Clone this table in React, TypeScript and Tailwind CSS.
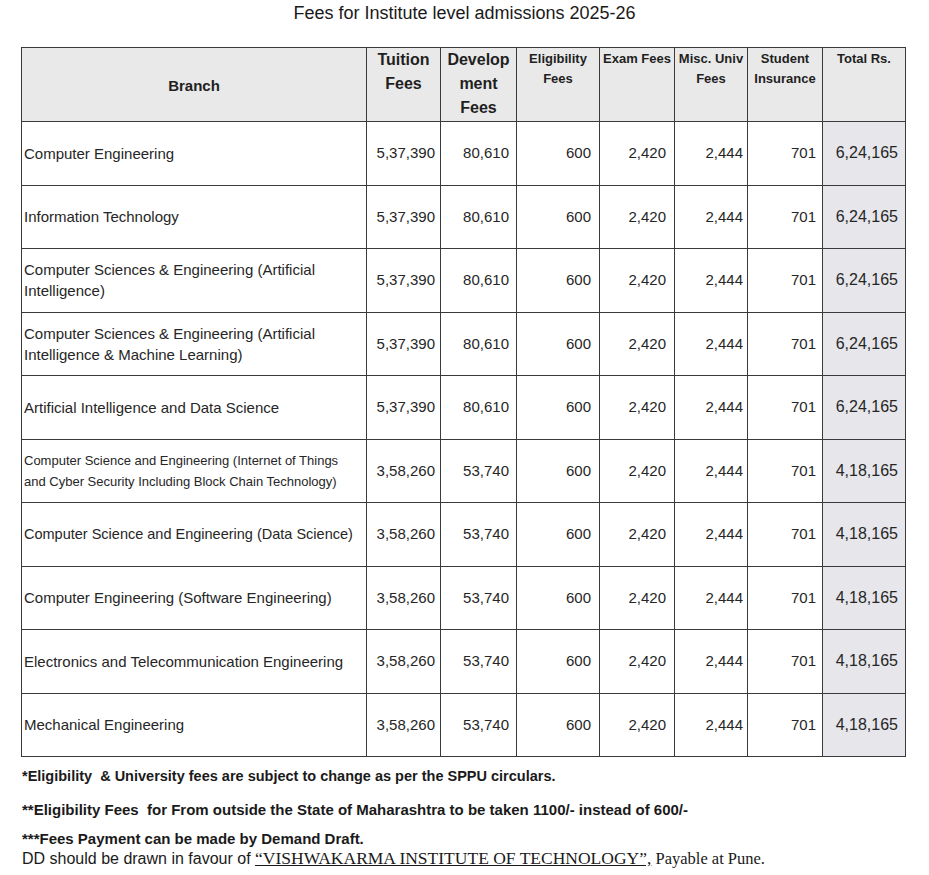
import React from 'react'

const narrow = { fontFamily: '"Liberation Sans Narrow", "Liberation Sans", Arial, sans-serif' }
const serif = { fontFamily: '"Liberation Serif", "Times New Roman", serif' }

type Row = {
  branch: React.ReactNode
  size?: string
  tuition: string
  dev: string
  total: string
}

const rows: Row[] = [
  { branch: 'Computer Engineering', tuition: '5,37,390', dev: '80,610', total: '6,24,165' },
  { branch: 'Information Technology', tuition: '5,37,390', dev: '80,610', total: '6,24,165' },
  {
    branch: (
      <>
        Computer Sciences &amp; Engineering (Artificial
        <br />
        Intelligence)
      </>
    ),
    tuition: '5,37,390',
    dev: '80,610',
    total: '6,24,165',
  },
  {
    branch: (
      <>
        Computer Sciences &amp; Engineering (Artificial
        <br />
        Intelligence &amp; Machine Learning)
      </>
    ),
    tuition: '5,37,390',
    dev: '80,610',
    total: '6,24,165',
  },
  { branch: 'Artificial Intelligence and Data Science', tuition: '5,37,390', dev: '80,610', total: '6,24,165' },
  {
    branch: (
      <>
        Computer Science and Engineering (Internet of Things
        <br />
        and Cyber Security Including Block Chain Technology)
      </>
    ),
    size: 'text-[13px]',
    tuition: '3,58,260',
    dev: '53,740',
    total: '4,18,165',
  },
  {
    branch: 'Computer Science and Engineering (Data Science)',
    size: 'text-[14.5px]',
    tuition: '3,58,260',
    dev: '53,740',
    total: '4,18,165',
  },
  { branch: 'Computer Engineering (Software Engineering)', tuition: '3,58,260', dev: '53,740', total: '4,18,165' },
  { branch: 'Electronics and Telecommunication Engineering', tuition: '3,58,260', dev: '53,740', total: '4,18,165' },
  { branch: 'Mechanical Engineering', tuition: '3,58,260', dev: '53,740', total: '4,18,165' },
]

const cell = 'border-[1.5px] border-[#3a3a3a]'
const num = `${cell} text-right align-middle`

export default function App() {
  return (
    <div
      className="w-[929px] h-[875px] bg-white text-[#262626] overflow-hidden"
      style={{ fontFamily: '"Liberation Sans", Arial, sans-serif' }}
    >
      <h1 className="pt-[2px] text-center text-[18px] leading-[22px] font-medium text-[#1a1a1a]" style={narrow}>
        Fees for Institute level admissions 2025-26
      </h1>

      <table className="ml-[21px] mt-[23px] w-[884px] table-fixed border-collapse">
        <colgroup>
          <col className="w-[345px]" />
          <col className="w-[74px]" />
          <col className="w-[76px]" />
          <col className="w-[83px]" />
          <col className="w-[75px]" />
          <col className="w-[73px]" />
          <col className="w-[75px]" />
          <col className="w-[83px]" />
        </colgroup>
        <thead>
          <tr className="h-[74px] bg-[#e9e9e9] text-[#1f1f1f]" style={narrow}>
            <th className={`${cell} align-middle text-[15px] font-semibold pt-[3px]`}>Branch</th>
            <th className={`${cell} align-top text-[16px] leading-[24px] font-semibold`}>
              Tuition
              <br />
              Fees
            </th>
            <th className={`${cell} align-top text-[16px] leading-[24px] font-semibold`}>
              Develop
              <br />
              ment
              <br />
              Fees
            </th>
            <th className={`${cell} align-top text-[13px] leading-[20px] font-semibold pt-[1px]`}>
              Eligibility
              <br />
              Fees
            </th>
            <th className={`${cell} align-top text-[13px] leading-[20px] font-semibold pt-[1px]`}>Exam Fees</th>
            <th className={`${cell} align-top text-[13px] leading-[20px] font-semibold pt-[1px]`}>
              Misc. Univ
              <br />
              Fees
            </th>
            <th className={`${cell} align-top text-[13px] leading-[20px] font-semibold pt-[1px]`}>
              Student
              <br />
              Insurance
            </th>
            <th className={`${cell} align-top text-[13px] leading-[20px] font-semibold pt-[1px]`}>Total Rs.</th>
          </tr>
        </thead>
        <tbody className="text-[15px]">
          {rows.map((r, i) => (
            <tr key={i} className="h-[63.5px]">
              <td className={`${cell} pl-[2px] align-middle leading-[21px] ${r.size ?? 'text-[15px]'}`}>{r.branch}</td>
              <td className={`${num} pr-[5px]`}>{r.tuition}</td>
              <td className={`${num} pr-[7px]`}>{r.dev}</td>
              <td className={`${num} pr-[8px]`}>600</td>
              <td className={`${num} pr-[8px]`}>2,420</td>
              <td className={`${num} pr-[4px]`}>2,444</td>
              <td className={`${num} pr-[6px]`}>701</td>
              <td className={`${num} pr-[7px] bg-[#e6e6eb] text-[16px]`}>{r.total}</td>
            </tr>
          ))}
        </tbody>
      </table>

      <div className="pl-[22px] text-[15px] font-semibold text-[#1a1a1a]" style={narrow}>
        <p className="mt-[10px] leading-[18px] text-[14.5px]">
          *Eligibility &nbsp;&amp; University fees are subject to change as per the SPPU circulars.
        </p>
        <p className="mt-[16px] leading-[18px]">
          **Eligibility Fees &nbsp;for From outside the State of Maharashtra to be taken 1100/- instead of 600/-
        </p>
        <p className="mt-[11px] leading-[18px]">***Fees Payment can be made by Demand Draft.</p>
        <p className="leading-[20px] font-normal text-[16px]">
          DD should be drawn in favour of{' '}
          <span className="text-[17.5px] underline" style={serif}>
            “VISHWAKARMA INSTITUTE OF TECHNOLOGY”,
          </span>
          <span className="text-[16.5px]" style={serif}>
            {' '}
            Payable at Pune.
          </span>
        </p>
      </div>
    </div>
  )
}
